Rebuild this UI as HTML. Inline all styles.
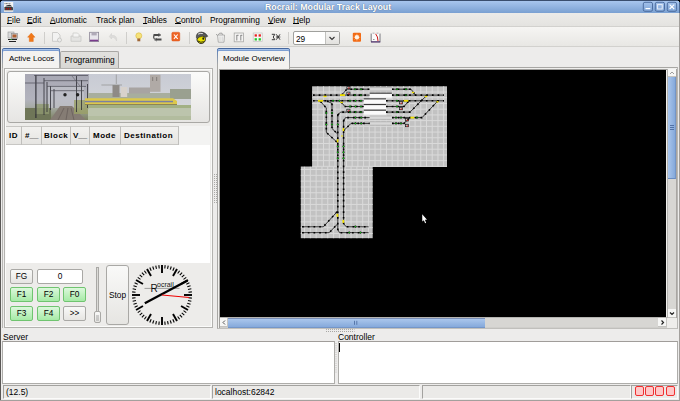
<!DOCTYPE html>
<html><head><meta charset="utf-8">
<style>
*{margin:0;padding:0;box-sizing:border-box}
html,body{width:680px;height:401px;overflow:hidden;background:#edeceb;font-family:"Liberation Sans",sans-serif;font-size:8.3px;color:#000;position:relative;}
u{text-decoration:underline;text-underline-offset:-0.3px;text-decoration-thickness:0.9px}
.a{position:absolute}
#title{left:0;top:0;width:680px;height:13px;background:linear-gradient(#a8c6ee,#7aa0d2);border-top:1px solid #3a4e6e}
#title .t{left:265px;top:1px;color:#fff;font-weight:bold;font-size:8.8px;text-shadow:0 0 1px #3a5070;-webkit-text-stroke:0}
.wb{top:2px;width:10px;height:9px;border:1px solid #4a6a9a;border-radius:2px;background:linear-gradient(#b0c8ea,#8aaad8)}
#menu{left:0;top:13px;width:680px;height:14px;background:linear-gradient(#ecebe9,#e4e3e0);border-bottom:1px solid #d2d1ce}
#menu span{position:absolute;top:2.2px}
#tool{left:0;top:27px;width:680px;height:20px;background:linear-gradient(#f6f5f3,#e8e7e4);border-bottom:1px solid #d2d1ce}
.sep{width:1px;height:12px;top:5px;background:#cfcecb}
.btn{border:1px solid #a9a8a5;border-radius:2px;background:linear-gradient(#f9f9f8,#e6e5e2);text-align:center;line-height:12px;font-size:8.3px}
.gbtn{border:1px solid #70c470;border-radius:2px;background:linear-gradient(#dcf8dc,#a6eaa6);text-align:center;line-height:12px;font-size:8.3px}
.fld{border:1px solid #fbfbfa;border-top-color:#a3a29f;border-left-color:#a3a29f;background:#ebeae8}
</style></head><body>

<div id="title" class="a">
  <svg class="a" style="left:0;top:-1px" width="16" height="14" viewBox="0 0 16 14">
    <rect x="4" y="2" width="9.2" height="9.8" fill="#f4f4f4"/>
    <path d="M4.6 3.6 H10.5" stroke="#555" stroke-width="0.9" stroke-dasharray="0.9 0.5"/>
    <path d="M5 6.6 Q7 4.6 10.5 4.9 L12.2 6.6 Z" fill="#333"/>
    <path d="M4.4 7.5 H12.8" stroke="#3a3a3a" stroke-width="1"/>
    <rect x="4.4" y="8.2" width="8.6" height="1.6" fill="#181818"/>
    <rect x="5.9" y="8" width="1" height="1.5" fill="#c00000"/><rect x="7.9" y="8" width="1" height="1.5" fill="#c00000"/><rect x="9.9" y="8" width="1" height="1.5" fill="#c00000"/>
    <path d="M4.4 10.6 H12.8" stroke="#b0aaa4" stroke-width="0.9"/>
  </svg>
  <div class="a t">Rocrail: Modular Track Layout</div>
  <svg class="a" style="left:640px;top:-1px" width="40" height="14" viewBox="640 0 40 14">
    <g fill="none" stroke="#46679a" stroke-width="0.9">
      <rect x="643.3" y="2.3" width="9.2" height="9" rx="1.6"/>
      <rect x="655.3" y="2.3" width="9.2" height="9" rx="1.6"/>
      <rect x="667.3" y="2.3" width="9.3" height="9" rx="1.6"/>
    </g>
    <path d="M645.5 8.6 H650.3" stroke="#fff" stroke-width="1.2"/>
    <rect x="657.6" y="4.6" width="4.6" height="4.4" fill="none" stroke="#e8eef8" stroke-width="1"/>
    <path d="M669.6 4.6 L674.2 9 M674.2 4.6 L669.6 9" stroke="#fff" stroke-width="1.1"/>
  </svg>
</div>

<div id="menu" class="a">
  <span style="left:7px"><u>F</u>ile</span>
  <span style="left:27px"><u>E</u>dit</span>
  <span style="left:50px"><u>A</u>utomatic</span>
  <span style="left:96px">Track plan</span>
  <span style="left:143px"><u>T</u>ables</span>
  <span style="left:175px"><u>C</u>ontrol</span>
  <span style="left:210px">Programming</span>
  <span style="left:268px"><u>V</u>iew</span>
  <span style="left:293px"><u>H</u>elp</span>
</div>

<div id="tool" class="a">
  <svg class="a" style="left:0;top:0" width="400" height="20" viewBox="0 27 400 20">
    <!-- network computers -->
    <rect x="8" y="32" width="6" height="6" fill="#d8d8d8" stroke="#999" stroke-width="0.6"/>
    <rect x="11.5" y="33.5" width="6" height="5" fill="#c9c9c9" stroke="#888" stroke-width="0.6"/>
    <rect x="12.5" y="34.5" width="4" height="3" fill="#b06030"/>
    <path d="M8 39.5 H17 M9 41.5 H16" stroke="#222" stroke-width="1.2"/>
    <rect x="10.5" y="39" width="1.5" height="1" fill="#30a030"/>
    <!-- orange up arrow -->
    <path d="M31.3 33 L35 37.2 L33.3 37.2 L33.3 41.5 L29.3 41.5 L29.3 37.2 L27.6 37.2 Z" fill="#f07818" stroke="#e06000" stroke-width="0.4"/>
    <!-- disabled new doc -->
    <path d="M52.5 32.5 H57.5 L60 35 V41.3 H52.5 Z" fill="#f2f2f1" stroke="#c4c4c2" stroke-width="0.8"/>
    <circle cx="59.5" cy="40" r="2" fill="#ececeb" stroke="#c0c0be" stroke-width="0.8"/>
    <!-- disabled open -->
    <path d="M71 36 H81 V41.3 H71 Z" fill="#e4e4e2" stroke="#c8c8c6" stroke-width="0.8"/>
    <path d="M73 33 H77.5 L79 34.5 V37 H73 Z" fill="#f4f4f3" stroke="#c8c8c6" stroke-width="0.7"/>
    <!-- floppy -->
    <rect x="89.6" y="32.3" width="9" height="9.3" fill="#e8e6ec" stroke="#8e8898" stroke-width="0.8"/>
    <rect x="91.5" y="32.6" width="5.2" height="2.8" fill="#b0aab8"/>
    <rect x="90" y="39.7" width="8.2" height="1.6" fill="#7a3c8c"/>
    <!-- undo disabled -->
    <path d="M116.5 41 C117.5 37 115 35 111.5 35.5 L111.5 33.5 L109.3 36.5 L111.5 39 L111.5 37.3 C114 37 115.5 38.5 116.5 41 Z" fill="#dddcda" stroke="#cfcecc" stroke-width="0.5"/>
    <!-- bulb -->
    <circle cx="138.8" cy="35.8" r="3" fill="#f6e27a" stroke="#d8b840" stroke-width="0.6"/>
    <rect x="137.3" y="38.5" width="3" height="2.8" fill="#a06838"/>
    <!-- switch -->
    <path d="M153.5 35 H160.5 M154.5 39.5 H161.5" stroke="#4a4a4a" stroke-width="2" fill="none"/>
    <path d="M154.2 35.5 Q152.8 37.2 154.5 39" stroke="#5a5a5a" stroke-width="1.2" fill="none"/>
    <path d="M158.5 33 L160.2 35 L158.5 36.8 M157 38 L155.2 39.7 L157 41.2" stroke="#6a6a6a" stroke-width="0.9" fill="none"/>
    <!-- red X -->
    <rect x="171.8" y="32.2" width="8" height="8.9" rx="1.2" fill="#ee6424" stroke="#d84c14" stroke-width="0.4"/>
    <path d="M173.9 34.5 L177.7 38.8 M177.7 34.5 L173.9 38.8" stroke="#fff" stroke-width="1.1"/>
    <!-- smiley -->
    <circle cx="201.2" cy="39.3" r="4.2" fill="#eae200" stroke="#151515" stroke-width="0.9"/>
    <path d="M196.3 37.5 Q196 32.2 201.5 32 Q205 32 207.8 36.2 L205.8 37.3 Q203 35.5 199.5 37 L197.5 38.5 Z" fill="#5a5a5a" stroke="#1a1a1a" stroke-width="0.5"/>
    <path d="M198 34.2 Q200 33 202.8 33.5" stroke="#f0f0f0" stroke-width="0.9" fill="none"/>
    <ellipse cx="203.2" cy="38.6" rx="0.8" ry="1.3" fill="#111"/>
    <path d="M198 41 Q200.8 43.2 203.8 41.6" stroke="#111" stroke-width="0.8" fill="none"/>
    <!-- clipboard gray -->
    <path d="M217.5 35 H224.5 L224 42.2 H218.3 Z" fill="#f2f2f1" stroke="#a0a09e" stroke-width="0.8"/>
    <path d="M218 34.8 L219.8 33.2 H222 L222.5 34.8" fill="none" stroke="#909090" stroke-width="0.8"/>
    <path d="M220 36.5 V41 M222.2 36.5 V41" stroke="#c0c0be" stroke-width="0.6"/>
    <path d="M216 34.2 L217.2 35.2" stroke="#808080" stroke-width="0.7"/>
    <!-- grid icon -->
    <rect x="234.2" y="33" width="9.2" height="8.8" fill="#f4f3f2" stroke="#a8a8a6" stroke-width="0.8"/>
    <path d="M236.8 35 V40.5 M240.8 35 V40.5 M236.8 35.3 H238.6 M240.8 35.3 H242.3" stroke="#707070" stroke-width="0.8"/>
    <!-- colour squares -->
    <rect x="253.2" y="33" width="9" height="8.6" fill="#f6f6f5" stroke="#c4c4c2" stroke-width="0.7"/>
    <rect x="254.6" y="34.3" width="2.3" height="2.3" fill="#e82020"/><rect x="258.6" y="34.3" width="2.3" height="2.3" fill="#e82020"/>
    <rect x="254.6" y="38.2" width="2.3" height="2.3" fill="#20c828"/><rect x="258.6" y="38.2" width="2.3" height="2.3" fill="#20c828"/>
    <!-- dark mixed -->
    <path d="M271.8 34.3 H274.8 L273.2 37 L274.8 39.7 H271.8 M276.3 34.3 L280 39.7 M280 34.3 L276.3 39.7 M276 37 H280.3" stroke="#3a3a3a" stroke-width="1" fill="none"/>
    <!-- orange star -->
    <rect x="352.8" y="32.7" width="8.2" height="9.1" rx="1" fill="#f26a14"/>
    <circle cx="356.9" cy="37.2" r="2.2" fill="#fff4e8"/>
    <path d="M356.9 33.8 V35 M356.9 39.4 V40.6 M353.6 37.2 H354.7 M359.1 37.2 H360.2 M354.6 34.9 L355.3 35.6 M358.5 38.8 L359.2 39.5 M359.2 34.9 L358.5 35.6 M355.3 38.8 L354.6 39.5" stroke="#ffc89a" stroke-width="0.7"/>
    <!-- book -->
    <rect x="371" y="33" width="9.2" height="8.6" fill="#fbfbfb"/>
    <path d="M371.2 33.5 V41.6 M380 33.5 V41.6" stroke="#6a6a70" stroke-width="0.9"/>
    <path d="M372.5 33.2 H374.5 M376.5 33.2 H378.5" stroke="#9a9aa0" stroke-width="0.8"/>
    <path d="M375.6 33.8 Q378 36.5 378 41" stroke="#d01818" stroke-width="1" fill="none"/>
    <path d="M373 39.5 H374.5" stroke="#555" stroke-width="0.6"/>
    <path d="M371 41.9 H380.3" stroke="#3a1a5a" stroke-width="1.2"/>
  </svg>
  <div class="a sep" style="left:44px"></div>
  <div class="a sep" style="left:126px"></div>
  <div class="a sep" style="left:189px"></div>
  <div class="a sep" style="left:288px"></div>
  <!-- combo -->
  <div class="a" style="left:293px;top:4px;width:47px;height:14px;border:1px solid #a0a09d;border-radius:2px;background:#fff"></div>
  <div class="a" style="left:325px;top:5px;width:14px;height:12px;background:linear-gradient(#f4f4f3,#e2e1de);border-left:1px solid #c0c0bd"></div>
  <div class="a" style="left:296px;top:7px;font-size:8.3px">29</div>
  <svg class="a" style="left:325px;top:5px" width="14" height="12"><path d="M4.5 5 L7 7.5 L9.5 5" stroke="#333" stroke-width="1.1" fill="none"/></svg>
</div>

<!-- LEFT NOTEBOOK -->
<div class="a" style="left:2px;top:67px;width:1px;height:261px;background:#b8b7b4"></div>
<div class="a" style="left:4px;top:68px;width:209px;height:260px;border:1px solid #b3b2af;box-shadow:inset 1px 1px 0 #fbfbfa, inset -1px -1px 0 #fbfbfa;background:#edecea"></div>
<div class="a" style="left:60px;top:51px;width:59px;height:17px;border:1px solid #a8a7a4;border-bottom:none;background:linear-gradient(#e2e1de,#d8d7d4);border-radius:2px 2px 0 0"></div>
<div class="a" style="left:64.5px;top:54.6px;font-size:8.4px">Programming</div>
<div class="a" style="left:2px;top:48px;width:58px;height:20px;border:1px solid #a8a7a4;border-top:1px solid #46689e;border-bottom:none;background:#f3f2f0;border-radius:2px 2px 0 0;box-shadow:inset 0 1px 0 #a6c2ea, inset 0 2px 0 #7c9ed2"></div>
<div class="a" style="left:2px;top:49px;width:1px;height:16px;background:linear-gradient(#5a80bc,#a8a7a4)"></div>
<div class="a" style="left:59px;top:49px;width:1px;height:16px;background:linear-gradient(#5a80bc,#a8a7a4)"></div>
<div class="a" style="left:9px;top:54px;font-size:8px">Active Locos</div>

<!-- image button -->
<div class="a" style="left:7px;top:71px;width:203px;height:52px;border:1px solid #a9a8a5;border-radius:3px;background:linear-gradient(#fbfbfa,#e6e5e3)"></div>
<div class="a" style="left:25px;top:74px;width:166px;height:46px;overflow:hidden;background:#cdd0d8">
  <svg width="166" height="46" viewBox="25 74 166 46" style="position:absolute;left:0;top:0">
    <defs>
      <linearGradient id="sky" x1="0" y1="0" x2="0" y2="1"><stop offset="0" stop-color="#c8cbd4"/><stop offset="1" stop-color="#d8d9dc"/></linearGradient>
      <linearGradient id="lz" x1="0" y1="0" x2="0" y2="1"><stop offset="0" stop-color="#a8a8b4"/><stop offset="0.55" stop-color="#b2b3bd"/><stop offset="0.7" stop-color="#a8aca8"/><stop offset="1" stop-color="#7c8262"/></linearGradient>
    </defs>
    <rect x="25" y="74" width="166" height="46" fill="url(#sky)"/>
    <rect x="25" y="74" width="64" height="46" fill="url(#lz)"/>
    <rect x="48" y="86" width="36" height="22" fill="#c0c1c9" opacity="0.75"/>
    <rect x="25" y="108" width="26" height="12" fill="#6f7658"/>
    <path d="M50 120 L60 106 L72 106 L86 120 Z" fill="#857c74"/>
    <path d="M58 120 L64 108 M66 120 L68 108 M74 120 L71 108" stroke="#5e5650" stroke-width="0.6"/>
    <rect x="74" y="100" width="15" height="14" fill="#9aa066" opacity="0.8"/>
    <rect x="35" y="104" width="14" height="10" fill="#8e9870" opacity="0.8"/>
    <g stroke="#2c2c34" fill="none">
      <path d="M35.9 75 V118" stroke-width="1.1"/>
      <path d="M44 78 V115 M47 82 V112 M50.5 86 V110 M54 89 V108 M76.5 76 V112 M81.5 80 V110 M87.5 84 V108" stroke-width="0.8"/>
    </g>
    <path d="M34 75.5 H88 M44 80.7 H88 M47 86.4 H86 M50 90.7 H84 M25 83 H44" stroke="#4c4c56" stroke-width="0.7"/>
    <path d="M72 76 L80 86" stroke="#606068" stroke-width="0.6"/>
    <circle cx="65" cy="94.7" r="1.7" fill="#222"/><circle cx="77.6" cy="94.7" r="1.7" fill="#222"/>
    <!-- village -->
    <rect x="88" y="93" width="103" height="6" fill="#a8ae9e"/>
    <rect x="170" y="89" width="21" height="10" fill="#9aa090"/>
    <rect x="150" y="74.8" width="10.5" height="17" fill="#b0aaa6"/><rect x="152" y="77" width="1.2" height="4" fill="#8a8480"/><rect x="156" y="77" width="1.2" height="4" fill="#8a8480"/>
    <rect x="129" y="87.5" width="21" height="6" fill="#a8a4a2"/>
    <rect x="120.7" y="87" width="6.5" height="10" fill="#d8d2cc"/>
    <rect x="112.5" y="85" width="7" height="12" fill="#8e8a86"/>
    <path d="M116.3 74.5 V84 M101.4 85 H122" stroke="#909090" stroke-width="0.7"/>
    <!-- train -->
    <path d="M85 98.3 H173 L177 101 V104.8 H85 Z" fill="#dcc84c"/>
    <rect x="85" y="100.8" width="88" height="1.5" fill="#7a80a4"/>
    <rect x="85" y="104.2" width="92" height="0.8" fill="#7a7450"/>
    <!-- field -->
    <rect x="88" y="105" width="103" height="3.5" fill="#a2b084"/>
    <rect x="88" y="108.5" width="103" height="11.5" fill="#bcc4ac"/>
    <rect x="88" y="116" width="103" height="4" fill="#a8b490" opacity="0.5"/>
  </svg>
</div>

<!-- table -->
<div class="a" style="left:6px;top:126px;width:204px;height:137px;background:#fff"></div>
<div class="a" style="left:7px;top:126px;width:203px;height:19px;background:#f3f3f2"></div>
<div class="a" style="left:6px;top:126px;width:173px;height:19px;background:linear-gradient(#f2f1ef,#e6e5e2);border-bottom:1px solid #c8c7c4;border-top:1px solid #c8c7c4"></div>
<div class="a" style="top:126px;left:21px;width:1px;height:19px;background:#c0bfbc"></div>
<div class="a" style="top:126px;left:41px;width:1px;height:19px;background:#c0bfbc"></div>
<div class="a" style="top:126px;left:70px;width:1px;height:19px;background:#c0bfbc"></div>
<div class="a" style="top:126px;left:89px;width:1px;height:19px;background:#c0bfbc"></div>
<div class="a" style="top:126px;left:120px;width:1px;height:19px;background:#c0bfbc"></div>
<div class="a" style="top:126px;left:178px;width:1px;height:19px;background:#c0bfbc"></div>
<div class="a" style="top:131px;left:9px;font-weight:bold;font-size:8px;letter-spacing:0.5px">ID</div>
<div class="a" style="top:131px;left:25px;font-weight:bold;font-size:8px;letter-spacing:0">#__</div>
<div class="a" style="top:131px;left:44px;font-weight:bold;font-size:8px;letter-spacing:0.5px">Block</div>
<div class="a" style="top:131px;left:73px;font-weight:bold;font-size:8px;letter-spacing:0">V__</div>
<div class="a" style="top:131px;left:93px;font-weight:bold;font-size:8px;letter-spacing:0.5px">Mode</div>
<div class="a" style="top:131px;left:124px;font-weight:bold;font-size:8px;letter-spacing:0.5px">Destination</div>

<!-- loco buttons -->
<div class="a btn" style="left:10px;top:269px;width:23px;height:15px">FG</div>
<div class="a" style="left:37px;top:269px;width:46px;height:15px;border:1px solid #a9a8a5;border-radius:2px;background:#fff;text-align:center;line-height:13px">0</div>
<div class="a gbtn" style="left:10px;top:287px;width:23px;height:15px">F1</div>
<div class="a gbtn" style="left:37px;top:287px;width:23px;height:15px">F2</div>
<div class="a gbtn" style="left:63px;top:287px;width:23px;height:15px">F0</div>
<div class="a gbtn" style="left:10px;top:306px;width:23px;height:15px">F3</div>
<div class="a gbtn" style="left:37px;top:306px;width:23px;height:15px">F4</div>
<div class="a btn" style="left:63px;top:306px;width:23px;height:15px">&gt;&gt;</div>
<!-- slider -->
<div class="a" style="left:96px;top:267px;width:3px;height:54px;border:1px solid #a9a8a5;background:#dcdbd8"></div>
<div class="a btn" style="left:94px;top:311px;width:7px;height:12px"></div>
<svg class="a" style="left:94px;top:311px" width="7" height="12"><path d="M2 5 H5 M2 7 H5 M2 9 H5" stroke="#888" stroke-width="0.7"/></svg>
<!-- stop -->
<div class="a btn" style="left:106px;top:265px;width:23px;height:60px;line-height:58px;border-radius:3px">Stop</div>
<!-- clock -->
<svg class="a" style="left:130px;top:263px" width="64" height="64" viewBox="-32 -32 64 64">
  <g stroke="#000"><line x1="0.00" y1="-22.00" x2="0.00" y2="-30.00" stroke-width="1.9"/><line x1="2.78" y1="-26.45" x2="3.14" y2="-29.84" stroke-width="1.1"/><line x1="5.53" y1="-26.02" x2="6.24" y2="-29.34" stroke-width="1.1"/><line x1="8.22" y1="-25.30" x2="9.27" y2="-28.53" stroke-width="1.1"/><line x1="10.82" y1="-24.30" x2="12.20" y2="-27.41" stroke-width="1.1"/><line x1="11.00" y1="-19.05" x2="15.00" y2="-25.98" stroke-width="1.9"/><line x1="15.64" y1="-21.52" x2="17.63" y2="-24.27" stroke-width="1.1"/><line x1="17.80" y1="-19.77" x2="20.07" y2="-22.29" stroke-width="1.1"/><line x1="19.77" y1="-17.80" x2="22.29" y2="-20.07" stroke-width="1.1"/><line x1="21.52" y1="-15.64" x2="24.27" y2="-17.63" stroke-width="1.1"/><line x1="19.05" y1="-11.00" x2="25.98" y2="-15.00" stroke-width="1.9"/><line x1="24.30" y1="-10.82" x2="27.41" y2="-12.20" stroke-width="1.1"/><line x1="25.30" y1="-8.22" x2="28.53" y2="-9.27" stroke-width="1.1"/><line x1="26.02" y1="-5.53" x2="29.34" y2="-6.24" stroke-width="1.1"/><line x1="26.45" y1="-2.78" x2="29.84" y2="-3.14" stroke-width="1.1"/><line x1="22.00" y1="-0.00" x2="30.00" y2="-0.00" stroke-width="1.9"/><line x1="26.45" y1="2.78" x2="29.84" y2="3.14" stroke-width="1.1"/><line x1="26.02" y1="5.53" x2="29.34" y2="6.24" stroke-width="1.1"/><line x1="25.30" y1="8.22" x2="28.53" y2="9.27" stroke-width="1.1"/><line x1="24.30" y1="10.82" x2="27.41" y2="12.20" stroke-width="1.1"/><line x1="19.05" y1="11.00" x2="25.98" y2="15.00" stroke-width="1.9"/><line x1="21.52" y1="15.64" x2="24.27" y2="17.63" stroke-width="1.1"/><line x1="19.77" y1="17.80" x2="22.29" y2="20.07" stroke-width="1.1"/><line x1="17.80" y1="19.77" x2="20.07" y2="22.29" stroke-width="1.1"/><line x1="15.64" y1="21.52" x2="17.63" y2="24.27" stroke-width="1.1"/><line x1="11.00" y1="19.05" x2="15.00" y2="25.98" stroke-width="1.9"/><line x1="10.82" y1="24.30" x2="12.20" y2="27.41" stroke-width="1.1"/><line x1="8.22" y1="25.30" x2="9.27" y2="28.53" stroke-width="1.1"/><line x1="5.53" y1="26.02" x2="6.24" y2="29.34" stroke-width="1.1"/><line x1="2.78" y1="26.45" x2="3.14" y2="29.84" stroke-width="1.1"/><line x1="0.00" y1="22.00" x2="0.00" y2="30.00" stroke-width="1.9"/><line x1="-2.78" y1="26.45" x2="-3.14" y2="29.84" stroke-width="1.1"/><line x1="-5.53" y1="26.02" x2="-6.24" y2="29.34" stroke-width="1.1"/><line x1="-8.22" y1="25.30" x2="-9.27" y2="28.53" stroke-width="1.1"/><line x1="-10.82" y1="24.30" x2="-12.20" y2="27.41" stroke-width="1.1"/><line x1="-11.00" y1="19.05" x2="-15.00" y2="25.98" stroke-width="1.9"/><line x1="-15.64" y1="21.52" x2="-17.63" y2="24.27" stroke-width="1.1"/><line x1="-17.80" y1="19.77" x2="-20.07" y2="22.29" stroke-width="1.1"/><line x1="-19.77" y1="17.80" x2="-22.29" y2="20.07" stroke-width="1.1"/><line x1="-21.52" y1="15.64" x2="-24.27" y2="17.63" stroke-width="1.1"/><line x1="-19.05" y1="11.00" x2="-25.98" y2="15.00" stroke-width="1.9"/><line x1="-24.30" y1="10.82" x2="-27.41" y2="12.20" stroke-width="1.1"/><line x1="-25.30" y1="8.22" x2="-28.53" y2="9.27" stroke-width="1.1"/><line x1="-26.02" y1="5.53" x2="-29.34" y2="6.24" stroke-width="1.1"/><line x1="-26.45" y1="2.78" x2="-29.84" y2="3.14" stroke-width="1.1"/><line x1="-22.00" y1="0.00" x2="-30.00" y2="0.00" stroke-width="1.9"/><line x1="-26.45" y1="-2.78" x2="-29.84" y2="-3.14" stroke-width="1.1"/><line x1="-26.02" y1="-5.53" x2="-29.34" y2="-6.24" stroke-width="1.1"/><line x1="-25.30" y1="-8.22" x2="-28.53" y2="-9.27" stroke-width="1.1"/><line x1="-24.30" y1="-10.82" x2="-27.41" y2="-12.20" stroke-width="1.1"/><line x1="-19.05" y1="-11.00" x2="-25.98" y2="-15.00" stroke-width="1.9"/><line x1="-21.52" y1="-15.64" x2="-24.27" y2="-17.63" stroke-width="1.1"/><line x1="-19.77" y1="-17.80" x2="-22.29" y2="-20.07" stroke-width="1.1"/><line x1="-17.80" y1="-19.77" x2="-20.07" y2="-22.29" stroke-width="1.1"/><line x1="-15.64" y1="-21.52" x2="-17.63" y2="-24.27" stroke-width="1.1"/><line x1="-11.00" y1="-19.05" x2="-15.00" y2="-25.98" stroke-width="1.9"/><line x1="-10.82" y1="-24.30" x2="-12.20" y2="-27.41" stroke-width="1.1"/><line x1="-8.22" y1="-25.30" x2="-9.27" y2="-28.53" stroke-width="1.1"/><line x1="-5.53" y1="-26.02" x2="-6.24" y2="-29.34" stroke-width="1.1"/><line x1="-2.78" y1="-26.45" x2="-3.14" y2="-29.84" stroke-width="1.1"/></g>
  <line x1="-17.5" y1="-6.6" x2="17.5" y2="-6.6" stroke="#7a7a7a" stroke-width="0.7"/>
  <text x="-11.5" y="-3.3" font-family="Liberation Sans" font-size="10px" fill="#111" stroke="none">R</text>
  <text x="-5" y="-7.8" font-family="Liberation Sans" font-size="7px" fill="#111" stroke="none">ocrail</text>
  <line x1="-17.2" y1="8.2" x2="25.6" y2="-14.5" stroke="#000" stroke-width="2.3"/>
  <line x1="0" y1="0" x2="27.2" y2="2.5" stroke="#f00000" stroke-width="1"/>
</svg>

<!-- RIGHT NOTEBOOK -->
<div class="a" style="left:217px;top:67px;width:461px;height:262px;border:1px solid #a8a7a4;border-right-color:#b8b7b4;border-bottom-color:#c0bfbc;background:#f0efed"></div>
<div class="a" style="left:219px;top:69px;width:458px;height:259px;border-left:1px solid #a09f9c;border-top:1px solid #a09f9c"></div>
<div class="a" style="left:217px;top:48px;width:73px;height:21px;border:1px solid #a8a7a4;border-top:1px solid #46689e;border-bottom:none;background:#f3f2f0;border-radius:2px 2px 0 0;box-shadow:inset 0 1px 0 #a6c2ea, inset 0 2px 0 #7c9ed2"></div>
<div class="a" style="left:217px;top:49px;width:1px;height:16px;background:linear-gradient(#5a80bc,#a8a7a4)"></div>
<div class="a" style="left:289px;top:49px;width:1px;height:16px;background:linear-gradient(#5a80bc,#a8a7a4)"></div>
<div class="a" style="left:223px;top:54px;font-size:8px">Module Overview</div>
<div class="a" style="left:220px;top:70px;width:446px;height:247px;background:#000"></div>

<!--TRACK-->
<svg class="a" style="left:295px;top:82px" width="160" height="160" viewBox="295 82 160 160">
<rect x="312.1" y="86.3" width="134.9" height="80.5" fill="#c2c2c2"/>
<rect x="300.8" y="166.5" width="71.9" height="71.7" fill="#c2c2c2"/>
<path d="M317.82 86.3V166.8 M323.54 86.3V166.8 M329.26 86.3V166.8 M334.98 86.3V166.8 M340.70 86.3V166.8 M346.42 86.3V166.8 M352.14 86.3V166.8 M357.86 86.3V166.8 M363.58 86.3V166.8 M369.30 86.3V166.8 M375.02 86.3V166.8 M380.74 86.3V166.8 M386.46 86.3V166.8 M392.18 86.3V166.8 M397.90 86.3V166.8 M403.62 86.3V166.8 M409.34 86.3V166.8 M415.06 86.3V166.8 M420.78 86.3V166.8 M426.50 86.3V166.8 M432.22 86.3V166.8 M437.94 86.3V166.8 M443.66 86.3V166.8 M312.1 92.02H447 M312.1 97.74H447 M312.1 103.46H447 M312.1 109.18H447 M312.1 114.90H447 M312.1 120.62H447 M312.1 126.34H447 M312.1 132.06H447 M312.1 137.78H447 M312.1 143.50H447 M312.1 149.22H447 M312.1 154.94H447 M312.1 160.66H447 M312.1 166.38H447 M304.50 166.8V238.2 M310.32 166.8V238.2 M316.14 166.8V238.2 M321.96 166.8V238.2 M327.78 166.8V238.2 M333.60 166.8V238.2 M339.42 166.8V238.2 M345.24 166.8V238.2 M351.06 166.8V238.2 M356.88 166.8V238.2 M362.70 166.8V238.2 M368.52 166.8V238.2 M300.8 169.50H372.7 M300.8 175.32H372.7 M300.8 181.14H372.7 M300.8 186.96H372.7 M300.8 192.78H372.7 M300.8 198.60H372.7 M300.8 204.42H372.7 M300.8 210.24H372.7 M300.8 216.06H372.7 M300.8 221.88H372.7 M300.8 227.70H372.7 M300.8 233.52H372.7" stroke="#dadada" stroke-width="1" fill="none"/>
<rect x="369.6" y="87.40" width="22.3" height="3.8" fill="#d8d8d8"/>
<path d="M369.6 87.60H391.9 M369.6 91.00H391.9" stroke="#a4a4a4" stroke-width="0.6"/>
<rect x="369.6" y="93.20" width="22.3" height="4.6" fill="#fafafa"/>
<rect x="369.6" y="97.80" width="22.3" height="1.4" fill="#dedede"/>
<path d="M369.6 93.20H391.90000000000003" stroke="#111" stroke-width="0.9"/>
<rect x="363.7" y="98.90" width="22.3" height="4.6" fill="#fafafa"/>
<rect x="363.7" y="103.50" width="22.3" height="1.4" fill="#dedede"/>
<path d="M363.7 98.90H386.0" stroke="#111" stroke-width="0.9"/>
<rect x="363.7" y="104.60" width="22.3" height="4.6" fill="#fafafa"/>
<rect x="363.7" y="109.20" width="22.3" height="1.4" fill="#dedede"/>
<path d="M363.7 104.60H386.0" stroke="#111" stroke-width="0.9"/>
<rect x="363.7" y="110.20" width="22.3" height="4.6" fill="#fafafa"/>
<rect x="363.7" y="114.80" width="22.3" height="1.4" fill="#dedede"/>
<path d="M363.7 110.20H386.0" stroke="#111" stroke-width="0.9"/>
<rect x="369.6" y="115.80" width="22.3" height="3.8" fill="#d8d8d8"/>
<path d="M369.6 116.00H391.9 M369.6 119.40H391.9" stroke="#a4a4a4" stroke-width="0.6"/>
<rect x="369.6" y="121.60" width="22.3" height="3.8" fill="#d8d8d8"/>
<path d="M369.6 121.80H391.9 M369.6 125.20H391.9" stroke="#a4a4a4" stroke-width="0.6"/>
<path d="M341.7 95.1 L346.8 89.2 L369.6 89.2 M392.0 89.2 L411.0 89.2 L415.5 95.1 M313.0 95.1 L369.6 95.1 M392.0 95.1 L444.0 95.1 M313.0 100.8 L363.7 100.8 M386.0 100.8 L444.0 100.8 M341.0 102.0 L345.0 106.5 L363.7 106.5 M386.0 106.5 L404.0 106.5 L409.0 100.8 M337.8 115.0 L340.5 112.1 L363.7 112.1 M386.0 112.1 L410.0 112.1 L427.0 95.1 M343.4 121.0 L345.5 117.6 L369.6 117.6 M392.0 117.6 L422.0 117.6 L438.0 100.8 M343.4 131.0 L351.0 123.4 L369.6 123.4 M392.0 123.4 L404.0 123.4 L410.0 117.6 M320.5 101.5 L326.3 108.0 L326.3 132.4 L336.8 142.0 M327.0 101.0 L332.0 103.5 L332.0 128.5 L337.6 134.0 M337.8 114.5 L337.8 229.4 L339.5 232.7 L368.6 232.7 M343.6 120.0 L343.6 223.5 L346.2 226.8 L368.6 226.8 M302.1 226.8 L323.3 226.8 L337.8 211.0 M302.1 232.7 L329.2 232.7 L337.4 224.1" stroke="#1a1a1a" stroke-width="0.85" fill="none"/>
<path d="M341.7 95.1 L346.8 89.2 L369.6 89.2 M392.0 89.2 L411.0 89.2 L415.5 95.1 M313.0 95.1 L369.6 95.1 M392.0 95.1 L444.0 95.1 M313.0 100.8 L363.7 100.8 M386.0 100.8 L444.0 100.8 M341.0 102.0 L345.0 106.5 L363.7 106.5 M386.0 106.5 L404.0 106.5 L409.0 100.8 M337.8 115.0 L340.5 112.1 L363.7 112.1 M386.0 112.1 L410.0 112.1 L427.0 95.1 M343.4 121.0 L345.5 117.6 L369.6 117.6 M392.0 117.6 L422.0 117.6 L438.0 100.8 M343.4 131.0 L351.0 123.4 L369.6 123.4 M392.0 123.4 L404.0 123.4 L410.0 117.6 M320.5 101.5 L326.3 108.0 L326.3 132.4 L336.8 142.0 M327.0 101.0 L332.0 103.5 L332.0 128.5 L337.6 134.0 M337.8 114.5 L337.8 229.4 L339.5 232.7 L368.6 232.7 M343.6 120.0 L343.6 223.5 L346.2 226.8 L368.6 226.8 M302.1 226.8 L323.3 226.8 L337.8 211.0 M302.1 232.7 L329.2 232.7 L337.4 224.1" stroke="#000" stroke-width="1.6" fill="none" stroke-dasharray="1.7 4.0" stroke-linecap="butt"/>
<rect x="323.50" y="95.70" width="3" height="1.4" fill="#f0e000"/>
<rect x="340.00" y="94.20" width="5" height="1.8" fill="#f0e000"/>
<rect x="318.00" y="99.90" width="5" height="1.8" fill="#f0e000"/>
<rect x="340.40" y="101.75" width="2.4" height="1.3" fill="#f0e000"/>
<rect x="411.80" y="91.85" width="2.4" height="1.3" fill="#f0e000"/>
<rect x="424.80" y="95.85" width="2.4" height="1.3" fill="#f0e000"/>
<rect x="403.75" y="99.90" width="4.5" height="1.8" fill="#f0e000"/>
<rect x="436.50" y="101.05" width="2" height="1.5" fill="#f0e000"/>
<rect x="410.40" y="116.70" width="4" height="1.8" fill="#f0e000"/>
<rect x="336.80" y="139.30" width="1.6" height="3" fill="#f0e000"/>
<rect x="342.60" y="128.10" width="1.6" height="3" fill="#f0e000"/>
<rect x="341.30" y="135.30" width="1.4" height="1.4" fill="#f0e000"/>
<rect x="336.50" y="213.80" width="1.8" height="3" fill="#f0e000"/>
<rect x="342.40" y="219.90" width="1.8" height="3" fill="#f0e000"/>
<rect x="346.80" y="86.30" width="3.2" height="2.4" fill="none" stroke="#1a1a1a" stroke-width="0.7"/><rect x="348.10" y="87.50" width="1.4" height="1" fill="#e01010"/>
<rect x="346.80" y="92.10" width="3.2" height="2.4" fill="none" stroke="#1a1a1a" stroke-width="0.7"/><rect x="348.10" y="93.30" width="1.4" height="1" fill="#e01010"/>
<rect x="346.80" y="109.20" width="3.2" height="2.4" fill="none" stroke="#1a1a1a" stroke-width="0.7"/><rect x="348.10" y="110.40" width="1.4" height="1" fill="#e01010"/>
<rect x="399.40" y="101.50" width="3.2" height="2.4" fill="none" stroke="#1a1a1a" stroke-width="0.7"/><rect x="400.70" y="102.70" width="1.4" height="1" fill="#e01010"/>
<rect x="399.40" y="107.30" width="3.2" height="2.4" fill="none" stroke="#1a1a1a" stroke-width="0.7"/><rect x="400.70" y="108.50" width="1.4" height="1" fill="#e01010"/>
<rect x="405.40" y="118.60" width="3.2" height="2.4" fill="none" stroke="#1a1a1a" stroke-width="0.7"/><rect x="406.70" y="119.80" width="1.4" height="1" fill="#e01010"/>
<rect x="405.40" y="124.30" width="3.2" height="2.4" fill="none" stroke="#1a1a1a" stroke-width="0.7"/><rect x="406.70" y="125.50" width="1.4" height="1" fill="#e01010"/>
<circle cx="355" cy="89.2" r="1.05" fill="#000"/><circle cx="355" cy="89.2" r="0.7" fill="#10e010"/>
<circle cx="361" cy="89.2" r="1.05" fill="#000"/><circle cx="361" cy="89.2" r="0.7" fill="#10e010"/>
<circle cx="355" cy="95.1" r="1.05" fill="#000"/><circle cx="355" cy="95.1" r="0.7" fill="#10e010"/>
<circle cx="361" cy="95.1" r="1.05" fill="#000"/><circle cx="361" cy="95.1" r="0.7" fill="#10e010"/>
<circle cx="350" cy="100.8" r="1.05" fill="#000"/><circle cx="350" cy="100.8" r="0.7" fill="#10e010"/>
<circle cx="355.5" cy="100.8" r="1.05" fill="#000"/><circle cx="355.5" cy="100.8" r="0.7" fill="#10e010"/>
<circle cx="361" cy="100.8" r="1.05" fill="#000"/><circle cx="361" cy="100.8" r="0.7" fill="#10e010"/>
<circle cx="350" cy="106.5" r="1.05" fill="#000"/><circle cx="350" cy="106.5" r="0.7" fill="#10e010"/>
<circle cx="355.5" cy="106.5" r="1.05" fill="#000"/><circle cx="355.5" cy="106.5" r="0.7" fill="#10e010"/>
<circle cx="361" cy="106.5" r="1.05" fill="#000"/><circle cx="361" cy="106.5" r="0.7" fill="#10e010"/>
<circle cx="350" cy="112.1" r="1.05" fill="#000"/><circle cx="350" cy="112.1" r="0.7" fill="#10e010"/>
<circle cx="355.5" cy="112.1" r="1.05" fill="#000"/><circle cx="355.5" cy="112.1" r="0.7" fill="#10e010"/>
<circle cx="361" cy="112.1" r="1.05" fill="#000"/><circle cx="361" cy="112.1" r="0.7" fill="#10e010"/>
<circle cx="355.4" cy="117.6" r="1.05" fill="#000"/><circle cx="355.4" cy="117.6" r="0.7" fill="#10e010"/>
<circle cx="361.2" cy="117.6" r="1.05" fill="#000"/><circle cx="361.2" cy="117.6" r="0.7" fill="#10e010"/>
<circle cx="355.4" cy="123.4" r="1.05" fill="#000"/><circle cx="355.4" cy="123.4" r="0.7" fill="#10e010"/>
<circle cx="361.2" cy="123.4" r="1.05" fill="#000"/><circle cx="361.2" cy="123.4" r="0.7" fill="#10e010"/>
<circle cx="397" cy="89.2" r="1.05" fill="#000"/><circle cx="397" cy="89.2" r="0.7" fill="#10e010"/>
<circle cx="397" cy="95.1" r="1.05" fill="#000"/><circle cx="397" cy="95.1" r="0.7" fill="#10e010"/>
<circle cx="397" cy="100.8" r="1.05" fill="#000"/><circle cx="397" cy="100.8" r="0.7" fill="#10e010"/>
<circle cx="397" cy="106.5" r="1.05" fill="#000"/><circle cx="397" cy="106.5" r="0.7" fill="#10e010"/>
<circle cx="397" cy="112.1" r="1.05" fill="#000"/><circle cx="397" cy="112.1" r="0.7" fill="#10e010"/>
<circle cx="406" cy="89.2" r="1.05" fill="#000"/><circle cx="406" cy="89.2" r="0.7" fill="#10e010"/>
<circle cx="406" cy="95.1" r="1.05" fill="#000"/><circle cx="406" cy="95.1" r="0.7" fill="#10e010"/>
<circle cx="396" cy="117.6" r="1.05" fill="#000"/><circle cx="396" cy="117.6" r="0.7" fill="#10e010"/>
<circle cx="401" cy="117.6" r="1.05" fill="#000"/><circle cx="401" cy="117.6" r="0.7" fill="#10e010"/>
<circle cx="396" cy="123.4" r="1.05" fill="#000"/><circle cx="396" cy="123.4" r="0.7" fill="#10e010"/>
<circle cx="401" cy="123.4" r="1.05" fill="#000"/><circle cx="401" cy="123.4" r="0.7" fill="#10e010"/>
<circle cx="417" cy="117.6" r="1.05" fill="#000"/><circle cx="417" cy="117.6" r="0.7" fill="#10e010"/>
<circle cx="326.3" cy="113" r="1.05" fill="#000"/><circle cx="326.3" cy="113" r="0.7" fill="#10e010"/>
<circle cx="326.3" cy="124.5" r="1.05" fill="#000"/><circle cx="326.3" cy="124.5" r="0.7" fill="#10e010"/>
<circle cx="332" cy="113" r="1.05" fill="#000"/><circle cx="332" cy="113" r="0.7" fill="#10e010"/>
<circle cx="332" cy="124.5" r="1.05" fill="#000"/><circle cx="332" cy="124.5" r="0.7" fill="#10e010"/>
<circle cx="337.8" cy="124.5" r="1.05" fill="#000"/><circle cx="337.8" cy="124.5" r="0.7" fill="#10e010"/>
<circle cx="343.5" cy="146.4" r="1.05" fill="#000"/><circle cx="343.5" cy="146.4" r="0.7" fill="#10e010"/>
<circle cx="337.8" cy="146.4" r="1.05" fill="#000"/><circle cx="337.8" cy="146.4" r="0.7" fill="#10e010"/>
<circle cx="337.8" cy="152.3" r="1.05" fill="#000"/><circle cx="337.8" cy="152.3" r="0.7" fill="#10e010"/>
<circle cx="343.5" cy="152.3" r="1.05" fill="#000"/><circle cx="343.5" cy="152.3" r="0.7" fill="#10e010"/>
<circle cx="337.8" cy="158.3" r="1.05" fill="#000"/><circle cx="337.8" cy="158.3" r="0.7" fill="#10e010"/>
<circle cx="343.5" cy="158.3" r="1.05" fill="#000"/><circle cx="343.5" cy="158.3" r="0.7" fill="#10e010"/>
<circle cx="355.4" cy="226.6" r="1.05" fill="#000"/><circle cx="355.4" cy="226.6" r="0.7" fill="#10e010"/>
<circle cx="349.2" cy="232.6" r="1.05" fill="#000"/><circle cx="349.2" cy="232.6" r="0.7" fill="#10e010"/>
<circle cx="360.4" cy="232.6" r="1.05" fill="#000"/><circle cx="360.4" cy="232.6" r="0.7" fill="#10e010"/>
<circle cx="339.4" cy="100.8" r="1.05" fill="#000"/><circle cx="339.4" cy="100.8" r="0.7" fill="#10e010"/>
<circle cx="333" cy="100.8" r="1.05" fill="#000"/><circle cx="333" cy="100.8" r="0.7" fill="#10e010"/>
</svg>
<!--/TRACK-->
<svg class="a" style="left:418px;top:211px" width="12" height="15" viewBox="418 211 12 15"><path d="M422.2 214.2 L422.3 221.6 L423.9 220.2 L425.1 223.2 L426.1 222.8 L424.9 219.8 L427 219.7 Z" fill="#fff"/></svg>
<!-- scrollbars -->
<div class="a" style="left:220px;top:317px;width:447px;height:11px;background:#d7d6d3;border-top:1px solid #b5b4b1;border-bottom:1px solid #cfcecb"></div>
<div class="a" style="left:228px;top:318px;width:257px;height:10px;background:linear-gradient(#aac6ec,#85a9db);border-top:1px solid #7a90b8;border-bottom:1px solid #7496c8"></div>
<div class="a" style="left:220px;top:318px;width:8px;height:9px;background:#f6f6f5;border-right:1px solid #c4c3c0;border-bottom:1px solid #c4c3c0"></div>
<svg class="a" style="left:220px;top:318px" width="8" height="9"><path d="M5 2.5 L3 4.5 L5 6.5" stroke="#555" stroke-width="1" fill="none"/></svg>
<div class="a" style="left:658px;top:318px;width:9px;height:9px;background:#f6f6f5;border-right:1px solid #c4c3c0;border-bottom:1px solid #c4c3c0"></div>
<svg class="a" style="left:658px;top:318px" width="9" height="9"><path d="M3.5 2.5 L5.5 4.5 L3.5 6.5" stroke="#222" stroke-width="1.2" fill="none"/></svg>
<div class="a" style="left:667px;top:69px;width:10px;height:249px;background:#d7d6d3;border-left:1px solid #b5b4b1;border-right:1px solid #a8a5a2"></div>
<div class="a" style="left:668px;top:77px;width:8px;height:102px;background:linear-gradient(90deg,#aac6ec,#85a9db);border-right:1px solid #7496c8;border-bottom:1px solid #6a8cc0"></div>
<svg class="a" style="left:668px;top:77px" width="8" height="102"><path d="M2 48.5 H6 M2 50.5 H6 M2 52.5 H6" stroke="#3f5f96" stroke-width="0.8"/></svg>
<div class="a" style="left:668px;top:69px;width:8px;height:8px;background:#f6f6f5;border-bottom:1px solid #c4c3c0"></div>
<svg class="a" style="left:668px;top:69px" width="8" height="8"><path d="M2 5 L4 3 L6 5" stroke="#888" stroke-width="0.8" fill="none"/></svg>
<div class="a" style="left:668px;top:309px;width:8px;height:9px;background:#f6f6f5;border-bottom:1px solid #c4c3c0"></div>
<svg class="a" style="left:668px;top:309px" width="8" height="9"><path d="M2 3.5 L4 5.5 L6 3.5" stroke="#222" stroke-width="1.2" fill="none"/></svg>
<div class="a" style="left:667px;top:318px;width:10px;height:10px;background:#eeedeb"></div>
<svg class="a" style="left:350px;top:318px" width="10" height="9"><path d="M354.5 320.8 V324.8 M356.8 320.8 V324.8" transform="translate(-350 -318)" stroke="#46669c" stroke-width="0.8"/></svg>

<!-- bottom -->
<svg class="a" style="left:320px;top:326px" width="40" height="8"><path d="M6 3.4 H34.5 M6 5.5 H34.5" stroke="#a8a7a4" stroke-width="1" stroke-dasharray="1 1"/></svg>
<svg class="a" style="left:334px;top:340px" width="4" height="40"><path d="M2 3 V33" stroke="#c0bfbc" stroke-width="1" stroke-dasharray="1 1.2"/></svg>
<svg class="a" style="left:212px;top:172px" width="6" height="34"><path d="M2.5 2 V31 M4.5 2 V31" stroke="#a8a7a4" stroke-width="1" stroke-dasharray="1 1"/></svg>
<div class="a" style="left:3px;top:332px;font-size:8.5px">Server</div>
<div class="a" style="left:2px;top:341px;width:333px;height:43px;background:#fff;border:1px solid #aeadaa;border-top-color:#a09d9a"></div>
<div class="a" style="left:338px;top:332px;font-size:8.5px">Controller</div>
<div class="a" style="left:338px;top:341px;width:340px;height:43px;background:#fff;border:1px solid #aeadaa;border-top-color:#a09d9a"></div>
<div class="a" style="left:339px;top:343px;width:1px;height:9px;background:#000"></div>

<!-- status -->
<div class="a fld" style="left:3px;top:385px;width:208px;height:14px"></div>
<div class="a fld" style="left:212px;top:385px;width:208px;height:14px"></div>
<div class="a fld" style="left:422px;top:385px;width:209px;height:14px"></div>
<div class="a fld" style="left:631px;top:385px;width:47px;height:14px"></div>
<div class="a" style="left:6px;top:387px;font-size:8.5px">(12.5)</div>
<div class="a" style="left:215px;top:387px;font-size:8.5px">localhost:62842</div>
<div class="a" style="left:635px;top:386px;width:9px;height:10px;border:1px solid #f03030;border-radius:2px;background:#ffc8c8"></div>
<div class="a" style="left:645px;top:386px;width:9px;height:10px;border:1px solid #f03030;border-radius:2px;background:#ffc8c8"></div>
<div class="a" style="left:655px;top:386px;width:9px;height:10px;border:1px solid #f03030;border-radius:2px;background:#ffc8c8"></div>
<div class="a" style="left:666px;top:386px;width:9px;height:10px;border:1px solid #f03030;border-radius:2px;background:#ffc8c8"></div>

<!-- window borders -->
<div class="a" style="left:0;top:1px;width:1px;height:12px;background:#4a6894"></div>
<div class="a" style="left:679px;top:1px;width:1px;height:12px;background:#4a6894"></div>
<div class="a" style="left:0;top:0;width:2px;height:1px;background:#000"></div>
<div class="a" style="left:0;top:0;width:1px;height:2px;background:#000"></div>
<div class="a" style="left:678px;top:0;width:2px;height:1px;background:#000"></div>
<div class="a" style="left:679px;top:0;width:1px;height:2px;background:#000"></div>
<div class="a" style="left:0;top:13px;width:1px;height:388px;background:#5a5856"></div>
<div class="a" style="left:679px;top:13px;width:1px;height:388px;background:#a3a09d"></div>
<div class="a" style="left:0;top:400px;width:680px;height:1px;background:#a3a09d"></div>

</body></html>
